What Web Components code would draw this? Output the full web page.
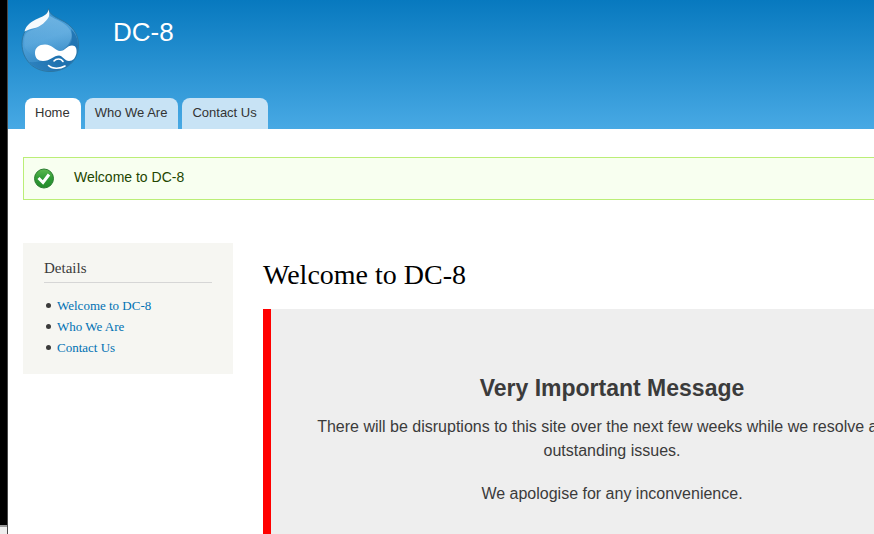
<!DOCTYPE html>
<html lang="en">
<head>
<meta charset="utf-8">
<title>Welcome to DC-8 | DC-8</title>
<style>
  html, body { height: 100%; }
  body { margin: 0; overflow: hidden; background: #fff; color: #3b3b3b; font-family: "Liberation Serif", serif; }
</style>
</head>
<body>
<site-page>
  <site-header slot="header" site-name="DC-8">
    <site-tab href="#home" active>Home</site-tab>
    <site-tab href="#who">Who We Are</site-tab>
    <site-tab href="#contact">Contact Us</site-tab>
  </site-header>
  <status-message slot="messages">Welcome to DC-8</status-message>
  <side-block slot="sidebar" heading="Details">
    <side-link href="#welcome">Welcome to DC-8</side-link>
    <side-link href="#who">Who We Are</side-link>
    <side-link href="#contact">Contact Us</side-link>
  </side-block>
  <page-article heading="Welcome to DC-8">
    <notice-box heading="Very Important Message">
      <notice-line>There will be disruptions to this site over the next few weeks while we resolve a few outstanding issues.</notice-line>
      <notice-line>We apologise for any inconvenience.</notice-line>
    </notice-box>
  </page-article>
</site-page>
<script>
function define(name, html) {
  const template = document.createElement('template');
  template.innerHTML = html;
  customElements.define(name, class extends HTMLElement {
    constructor() {
      super();
      this.attachShadow({ mode: 'open' }).append(template.content.cloneNode(true));
    }
    connectedCallback() {
      this.shadowRoot.querySelectorAll('[data-text]').forEach(el => {
        el.textContent = this.getAttribute(el.dataset.text);
      });
      const link = this.shadowRoot.querySelector('a[data-link]');
      if (link) link.href = this.getAttribute('href');
    }
  });
}

define('site-page', `
<style>
  :host { display: flex; height: 100%; }
  .edge { flex: none; width: 7px; display: flex; flex-direction: column; background: #000; border-right: 1px solid #4a4a4a; }
  .edge::after { content: ""; margin-top: auto; height: 7px; background: #eee; border-top: 2px solid #999; }
  .view { flex: 1; min-width: 0; overflow: hidden; }
  .wide { min-width: 960px; }
  .messages { padding: 28px 0 0 15px; }
  .columns { display: grid; grid-template-columns: 210px minmax(0, 1fr); gap: 30px; align-items: start; padding: 43px 15px 0; }
</style>
<div class="edge"></div>
<div class="view"><div class="wide">
  <slot name="header"></slot>
  <div class="messages"><slot name="messages"></slot></div>
  <div class="columns"><slot name="sidebar"></slot><slot></slot></div>
</div></div>`);

define('site-header', `
<style>
  :host { display: block; background: linear-gradient(#0779bf, #48a9e4); font-family: "Liberation Sans", sans-serif; }
  .brand { display: flex; gap: 33px; padding: 8px 13px 24px; }
  .name { padding-top: 8px; color: #fff; font-size: 26px; line-height: 32px; text-decoration: none; }
  nav { display: flex; gap: 4px; padding-left: 17px; }
</style>
<header>
  <div class="brand"><site-logo></site-logo><a class="name" href="#home" data-text="site-name"></a></div>
  <nav><slot></slot></nav>
</header>`);

define('site-logo', `
<style>:host { display: block; } svg { display: block; }</style>
<svg width="59" height="66" viewBox="0 0 59 66" aria-hidden="true">
  <defs>
    <linearGradient id="body" x1="0.2" y1="0" x2="0.5" y2="1">
      <stop offset="0" stop-color="#3b93cf"/><stop offset=".5" stop-color="#4c9fd8"/><stop offset="1" stop-color="#2c80bd"/>
    </linearGradient>
    <linearGradient id="shade" x1="1" y1="0" x2="0" y2="1">
      <stop offset="0" stop-color="#1a6fae"/><stop offset=".6" stop-color="#1a6dab"/><stop offset="1" stop-color="#2e83c0"/>
    </linearGradient>
    <linearGradient id="glow" x1="0" y1="0" x2="0" y2="1">
      <stop offset="0" stop-color="#8cc6ec" stop-opacity=".6"/><stop offset="1" stop-color="#8cc6ec" stop-opacity="0"/>
    </linearGradient>
  </defs>
  <path d="M27.500 .8C28 6 34 9 40 12C51 17 57.500 26 57.500 37C57.500 53 45 63.500 29 63.500C13 63.500 1 52 1 35.500C1 26 6 18 13 13.500C20 9.500 27 8 27.500 .8Z" fill="url(#body)" stroke="#2c7099" stroke-opacity=".8"/>
  <path d="M50 21C55 26 57 31 57 38C56.500 53 44 63 30 63C21 63 13 59.500 8 54C18 55 28 51 36 46C45 41 53 33 50 21Z" fill="url(#shade)" opacity=".8"/>
  <path d="M28 7C33 12 48 14 51 27C52 36 45 42 36 46C22 52 10 49 4 40C2 30 4 25 8 23C18 20 26 14 28 7Z" fill="url(#glow)"/>
  <path d="M3.500 23.500C5 17 11 13 17 10.500C23 8 27 6 27.500 1.500C28.500 5 29 8 26.500 11C22.500 16 19 18.500 14 20C9 21 7 22 3.500 23.500Z" fill="#fff" fill-opacity=".95"/>
  <path d="M14 45C14 39.500 18 36.500 24 36.500C31 36.500 35 43 39 43C44 43 46 37.500 51 37.500C55 37.500 56 41 55.500 45C54.500 50 52 53 48 53C44 53 41 47.500 38 47.500C33 47.500 29 53 22 53C17 53 14 50 14 45Z" fill="#fff"/>
  <path d="M33 53C35 50.500 40 50 42 53.500M27.500 57.500C31 61 39 61 44 58" fill="none" stroke="#fff" stroke-width="1.600" stroke-linecap="round"/>
</svg>`);

define('site-tab', `
<style>
  :host { display: block; }
  a { display: block; padding: 4px 11px 5px 10px; border-radius: 8px 8px 0 0; background: #c8e3f5; color: #333; font-size: 13px; line-height: 22px; text-decoration: none; }
  :host([active]) a { background: #fff; }
</style>
<a data-link><slot></slot></a>`);

define('status-message', `
<style>
  :host { display: flex; align-items: center; gap: 20px; padding: 10px; border: 1px solid #be7; background: #f8fff0; color: #234600; font: 14px/21px "Liberation Sans", sans-serif; }
  svg { display: block; flex: none; }
  p { margin: 0; padding-bottom: 2px; line-height: 19px; }
</style>
<svg width="20" height="21" viewBox="0 0 20 21" aria-hidden="true">
  <defs><linearGradient id="g" x1="0" y1="0" x2="0" y2="1"><stop offset="0" stop-color="#5cb84f"/><stop offset=".5" stop-color="#2f9a35"/><stop offset="1" stop-color="#258b2c"/></linearGradient></defs>
  <circle cx="10" cy="10.500" r="9.500" fill="url(#g)" stroke="#2c7c32"/>
  <path d="M4.500 10L9 14.500L15 6.500" fill="none" stroke="#fff" stroke-width="3"/>
</svg>
<p role="status"><slot></slot></p>`);

define('side-block', `
<style>
  :host { display: block; padding: 14px 21px 16px; background: #f6f6f2; }
  h2 { margin: 0 0 12px; padding-bottom: 3px; border-bottom: 1px solid #d6d6d6; font-size: 15px; line-height: 22px; font-weight: 400; color: #3b3b3b; }
</style>
<h2 data-text="heading"></h2>
<div role="list"><slot></slot></div>`);

define('side-link', `
<style>
  :host { display: flex; align-items: center; gap: 6px; padding-left: 2px; font-size: 13px; line-height: 21px; }
  :host::before { content: ""; width: 5px; height: 5px; border-radius: 50%; background: #3b3b3b; }
  a { color: #0071b3; text-decoration: none; }
</style>
<a data-link><slot></slot></a>`);

define('page-article', `
<style>
  :host { display: block; padding-top: 15px; }
  h1 { margin: 0 0 17px; color: #000; font-size: 28px; line-height: 34px; font-weight: 400; }
</style>
<h1 data-text="heading"></h1>
<slot></slot>`);

define('notice-box', `
<style>
  :host { display: block; padding: 64px 40px 80px; border-left: 8px solid #f00; background: #eee; text-align: center; font-family: "Liberation Sans", sans-serif; }
  h2 { margin: 0 0 12px; font-size: 23px; line-height: 30px; font-weight: 700; color: #3b3b3b; }
</style>
<h2 data-text="heading"></h2>
<slot></slot>`);

define('notice-line', `
<style>
  :host { display: block; margin-bottom: 19px; font-size: 16px; line-height: 24px; }
  p { margin: 0; }
</style>
<p><slot></slot></p>`);
</script>
</body>
</html>
